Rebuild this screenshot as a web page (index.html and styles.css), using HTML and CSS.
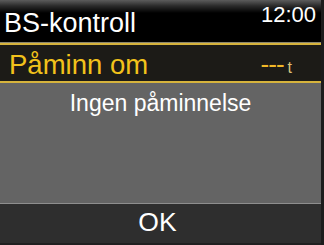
FILE: index.html
```html
<!DOCTYPE html>
<html lang="no">
<head>
<meta charset="utf-8">
<title>BS-kontroll</title>
<link rel="stylesheet" href="styles.css">
</head>
<body>
<div class="screen">
  <header class="header">
    <span class="title">BS-kontroll</span>
    <span class="clock">12:00</span>
  </header>
  <div class="row">
    <span class="label">Påminn om</span>
    <span class="value"><span class="dashes">---</span><span class="unit">t</span></span>
  </div>
  <main class="content">
    <p class="message">Ingen påminnelse</p>
  </main>
  <footer class="footer">
    <span class="ok">OK</span>
  </footer>
</div>
</body>
</html>
```

FILE: styles.css
```css
html, body {
  margin: 0;
  padding: 0;
  background: #1c1c1c;
}
.screen {
  width: 321px;
  height: 245px;
  display: flex;
  flex-direction: column;
  font-family: "Liberation Sans", Arial, sans-serif;
  overflow: hidden;
}
.header {
  height: 43px;
  flex: none;
  display: flex;
  justify-content: space-between;
  align-items: flex-start;
  background: linear-gradient(#5c5c5c 0px, #2a2a2a 6px, #000 13px, #000 100%);
  border-bottom: 1px solid #8a8670;
  box-sizing: border-box;
}
.title {
  color: #fff;
  font-size: 27px;
  line-height: 27px;
  padding: 10px 0 0 4px;
}
.clock {
  color: #fff;
  font-size: 22px;
  line-height: 22px;
  padding: 4px 5px 0 0;
}
.row {
  height: 40px;
  flex: none;
  box-sizing: border-box;
  border-top: 2px solid #d6b33c;
  border-bottom: 2px solid #d6b33c;
  background: #1c1b17;
  display: flex;
  justify-content: space-between;
  align-items: flex-start;
}
.label {
  color: #f2c21b;
  font-size: 27.5px;
  line-height: 27px;
  padding: 6px 0 0 9px;
}
.value {
  padding: 6px 29px 0 0;
  display: flex;
  align-items: baseline;
  gap: 4px;
}
.dashes {
  color: #f0b828;
  font-size: 26px;
  line-height: 26px;
  letter-spacing: -1px;
}
.unit {
  color: #d9c27a;
  font-size: 16px;
  line-height: 16px;
}
.content {
  flex: none;
  height: 121px;
  box-sizing: border-box;
  background: #646464;
  border-bottom: 1px solid #8e8e8e;
  padding-top: 9px;
}
.message {
  margin: 0;
  color: #fff;
  font-size: 23px;
  line-height: 23px;
  text-align: center;
}
.footer {
  flex: 1;
  background: #2e2e2e;
  border-bottom: 2px solid #202020;
  text-align: center;
  padding-top: 5px;
  padding-right: 6px;
}
.ok {
  color: #fff;
  font-size: 26.5px;
  line-height: 26px;
}
```
